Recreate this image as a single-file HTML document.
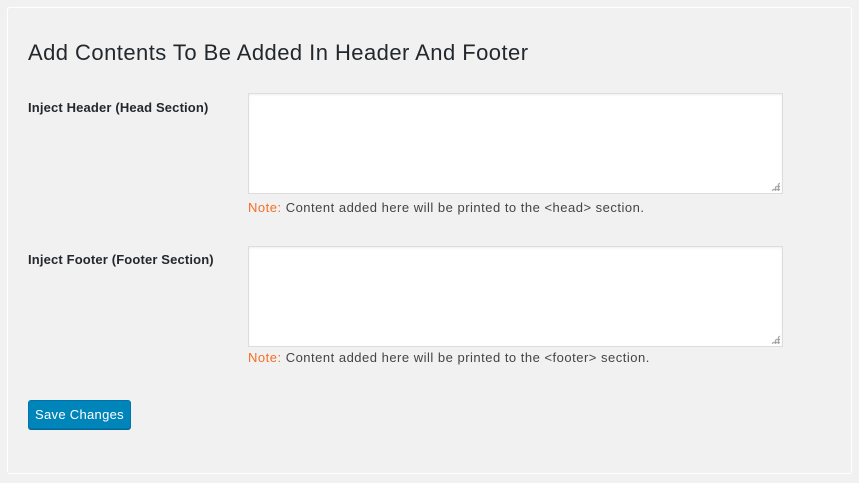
<!DOCTYPE html>
<html><head><style>
body{margin:0;width:859px;height:483px;background:#f1f1f1;font-family:"Liberation Sans",sans-serif;position:relative;overflow:hidden}
.panel{position:absolute;left:7px;top:7px;width:843px;height:465px;border:1px solid #fff;border-radius:3px}
h1{position:absolute;left:28px;top:40px;margin:0;font-weight:normal;font-size:22px;letter-spacing:0.45px;color:#23282d}
.lbl{position:absolute;left:28px;font-size:13px;font-weight:bold;letter-spacing:0.15px;color:#23282d}
.ta{position:absolute;left:248px;width:533px;height:99px;background:#fff;border:1px solid #ddd;box-shadow:inset 0 1px 2px rgba(0,0,0,.07)}
.grip{position:absolute;right:2px;bottom:2px;width:9px;height:9px;background:radial-gradient(circle,#999 1.2px,transparent 1.4px) 0 0/3px 3px;clip-path:polygon(100% 0,100% 100%,0 100%)}
.note{position:absolute;left:248px;font-size:13px;letter-spacing:0.5px;color:#444}
.note span{color:#f56e28}
.btn{position:absolute;left:28px;top:400px;width:101px;height:27px;background:#0085ba;border:1px solid #0073aa;border-radius:3px;box-shadow:0 1px 0 #006799;color:#fff;font-size:13px;letter-spacing:0.3px;line-height:28px;text-align:center}
</style></head><body>
<div class="panel"></div>
<h1>Add Contents To Be Added In Header And Footer</h1>
<div class="lbl" style="top:100px">Inject Header (Head Section)</div>
<div class="ta" style="top:93px"><div class="grip"></div></div>
<div class="note" style="top:200px"><span>Note:</span> Content added here will be printed to the &lt;head&gt; section.</div>
<div class="lbl" style="top:252px">Inject Footer (Footer Section)</div>
<div class="ta" style="top:246px"><div class="grip"></div></div>
<div class="note" style="top:350px"><span>Note:</span> Content added here will be printed to the &lt;footer&gt; section.</div>
<div class="btn">Save Changes</div>
</body></html>
